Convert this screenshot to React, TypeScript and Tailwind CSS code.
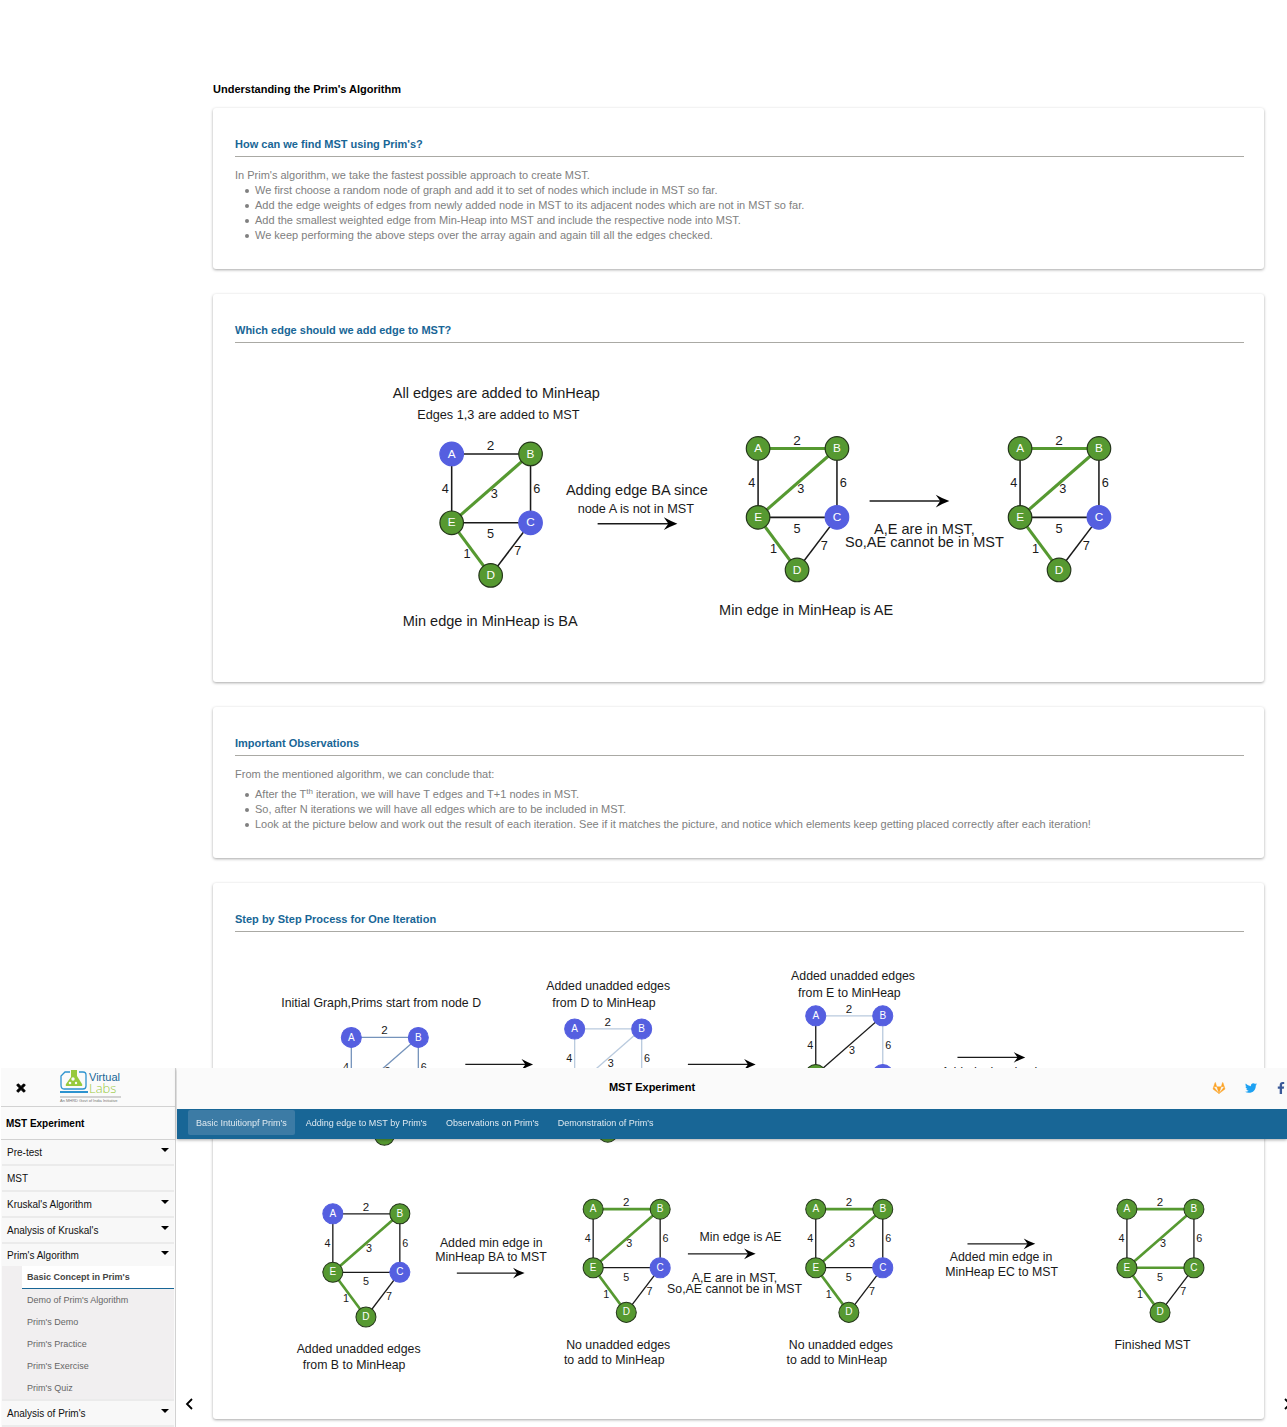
import type { ReactNode } from "react";
import { FaFacebookF, FaGitlab, FaTimes, FaTwitter } from "react-icons/fa";

const GREEN = "#569931";
const BLUE = "#555fe0";
const BLACK = "#1a1a1a";
const STEEL = "#7593bb";
const PALE = "#b9cade";

type NodeId = "A" | "B" | "C" | "D" | "E";
type EdgeId = "AB" | "AE" | "BE" | "BC" | "EC" | "ED" | "CD";

const NODES: Record<NodeId, [number, number]> = {
  A: [0, 0],
  B: [87, 0],
  C: [87, 76],
  D: [44, 134],
  E: [0, 76],
};

const WEIGHTS: { text: string; x: number; y: number; size: number }[] = [
  { text: "2", x: 43, y: -4, size: 15 },
  { text: "4", x: -7, y: 43, size: 14 },
  { text: "3", x: 47, y: 49, size: 14 },
  { text: "6", x: 94, y: 43, size: 14 },
  { text: "5", x: 43, y: 93, size: 14 },
  { text: "1", x: 17, y: 115, size: 14 },
  { text: "7", x: 73, y: 112, size: 14 },
];

const EDGES: EdgeId[] = ["AB", "AE", "BC", "EC", "CD", "BE", "ED"];

type GraphProps = {
  x: number;
  y: number;
  visited: string;
  tree?: EdgeId[];
  base?: string;
  heap?: EdgeId[];
  bottom?: number;
};

function Graph({ x, y, visited, tree = [], base = BLACK, heap = [], bottom = 134 }: GraphProps) {
  const place = (id: NodeId): [number, number] => (id === "D" ? [43, bottom] : NODES[id]);
  return (
    <g transform={`translate(${x} ${y})`}>
      {EDGES.map((id) => {
        const [x1, y1] = place(id[0] as NodeId);
        const [x2, y2] = place(id[1] as NodeId);
        const inTree = tree.includes(id);
        const color = inTree ? GREEN : heap.includes(id) ? BLACK : base;
        return <line key={id} x1={x1} y1={y1} x2={x2} y2={y2} stroke={color} strokeWidth={inTree ? 3.4 : 1.7} />;
      })}
      {(Object.keys(NODES) as NodeId[]).map((id) => {
        const [cx, cy] = place(id);
        const on = visited.includes(id);
        return (
          <g key={id}>
            <circle cx={cx} cy={cy} r={13} fill={on ? GREEN : BLUE} stroke={on ? "#24361a" : BLUE} strokeWidth={1.3} />
            <text x={cx} y={cy + 4} fontSize={13} fill="#fff" textAnchor="middle">
              {id}
            </text>
          </g>
        );
      })}
      {WEIGHTS.map((w) => (
        <text key={w.text} x={w.x} y={w.y} fontSize={w.size} fill={BLACK} textAnchor="middle">
          {w.text}
        </text>
      ))}
    </g>
  );
}

function Arrow({ x, y }: { x: number; y: number }) {
  return (
    <g transform={`translate(${x} ${y})`}>
      <line x1={0} y1={0} x2={82} y2={0} stroke={BLACK} strokeWidth={1.6} />
      <path d="M88 0 Q80 -3 73 -7 L78 0 L73 7 Q80 3 88 0 Z" fill="#000" />
    </g>
  );
}

function Note({ x, y, size = 16, children }: { x: number; y: number; size?: number; children: string }) {
  return (
    <text x={x} y={y} fontSize={size} fill={BLACK}>
      {children}
    </text>
  );
}

function EdgeFigure() {
  return (
    <svg viewBox="0 0 1113 335" className="mt-[13px] block w-full" role="img" aria-label="Choosing the next edge for the MST">
      <Note x={174} y={46}>All edges are added to MinHeap</Note>
      <Note x={201} y={70} size={14}>Edges 1,3 are added to MST</Note>
      <Graph x={239} y={108} visited="BED" tree={["BE", "ED"]} />
      <Note x={185} y={298}>Min edge in MinHeap is BA</Note>
      <Note x={365} y={153}>Adding edge BA since</Note>
      <Note x={378} y={173} size={14}>node A is not in MST</Note>
      <Arrow x={400} y={185} />
      <Graph x={577} y={102} visited="ABED" tree={["AB", "BE", "ED"]} />
      <Note x={534} y={286}>Min edge in MinHeap is AE</Note>
      <Arrow x={700} y={160} />
      <Note x={705} y={196}>A,E are in MST,</Note>
      <Note x={673} y={211}>So,AE cannot be in MST</Note>
      <Graph x={866} y={102} visited="ABED" tree={["AB", "BE", "ED"]} />
    </svg>
  );
}

function IterationFigure() {
  return (
    <svg viewBox="0 0 1310 587" className="mt-[13px] block w-full" role="img" aria-label="Iterations of Prim's algorithm">
      <Note x={60} y={80}>Initial Graph,Prims start from node D</Note>
      <Graph x={151} y={120} visited="D" base={STEEL} bottom={127} />
      <Arrow x={299} y={155} />
      <Note x={404} y={59}>Added unadded edges</Note>
      <Note x={412} y={80}>from D to MinHeap</Note>
      <Graph x={441} y={109} visited="D" base={PALE} heap={["ED", "CD"]} />
      <Arrow x={588} y={155} />
      <Note x={722} y={46}>Added unadded edges</Note>
      <Note x={731} y={68}>from E to MinHeap</Note>
      <Graph x={754} y={92} visited="ED" base={PALE} tree={["ED"]} heap={["AE", "BE", "EC", "CD"]} />
      <Arrow x={938} y={146} />
      <Note x={917} y={170}>Added min edge in</Note>

      <Graph x={127} y={349} visited="BED" tree={["BE", "ED"]} />
      <Note x={80} y={530}>Added unadded edges</Note>
      <Note x={88} y={550}>from B to MinHeap</Note>
      <Note x={266} y={392}>Added min edge in</Note>
      <Note x={260} y={410}>MinHeap BA to MST</Note>
      <Arrow x={288} y={426} />
      <Graph x={465} y={343} visited="ABED" tree={["AB", "BE", "ED"]} />
      <Note x={430} y={524}>No unadded edges</Note>
      <Note x={427} y={544}>to add to MinHeap</Note>
      <Note x={603} y={384}>Min edge is AE</Note>
      <Arrow x={588} y={401} />
      <Note x={593} y={437}>A,E are in MST,</Note>
      <Note x={561} y={452}>So,AE cannot be in MST</Note>
      <Graph x={754} y={343} visited="ABED" tree={["AB", "BE", "ED"]} />
      <Note x={719} y={524}>No unadded edges</Note>
      <Note x={716} y={544}>to add to MinHeap</Note>
      <Arrow x={951} y={388} />
      <Note x={928} y={410}>Added min edge in</Note>
      <Note x={922} y={430}>MinHeap EC to MST</Note>
      <Graph x={1158} y={343} visited="ABCED" tree={["AB", "BE", "EC", "ED"]} />
      <Note x={1142} y={524}>Finished MST</Note>
    </svg>
  );
}

function Card({ title, children, text = false }: { title: string; children: ReactNode; text?: boolean }) {
  return (
    <section
      className={`rounded-[3px] bg-white pt-7 pr-5 pl-[22px] shadow-[0_1px_3px_rgba(0,0,0,0.35)] ${text ? "pb-[26px]" : "pb-[22px]"}`}
    >
      <h2 className="border-b border-[#aaa9a4] pb-1 text-[11px] leading-4 font-bold text-[#186696]">{title}</h2>
      {children}
    </section>
  );
}

function Bullet({ children }: { children: ReactNode }) {
  return (
    <li className="flex gap-[6px] pl-[10px]">
      <span className="mt-[6px] size-1 shrink-0 rounded-full bg-[#808080]" />
      <p>{children}</p>
    </li>
  );
}

const STEPS = [
  "We first choose a random node of graph and add it to set of nodes which include in MST so far.",
  "Add the edge weights of edges from newly added node in MST to its adjacent nodes which are not in MST so far.",
  "Add the smallest weighted edge from Min-Heap into MST and include the respective node into MST.",
  "We keep performing the above steps over the array again and again till all the edges checked.",
];

const TABS = ["Basic Intuitionpf Prim's", "Adding edge to MST by Prim's", "Observations on Prim's", "Demonstration of Prim's"];

const LESSONS = ["Basic Concept in Prim's", "Demo of Prim's Algorithm", "Prim's Demo", "Prim's Practice", "Prim's Exercise", "Prim's Quiz"];

function Caret() {
  return (
    <svg viewBox="0 0 8 4" className="mb-1 h-1 w-2" aria-hidden="true">
      <path d="M0 0H8L4 4Z" fill="#000" />
    </svg>
  );
}

function Section({ label, caret = true }: { label: string; caret?: boolean }) {
  return (
    <button className="flex h-[26px] w-full items-center justify-between border-b-2 border-[#ebebeb] bg-[#f8f8f8] px-[5px] text-left text-[10px] text-[#111]">
      {label}
      {caret && <Caret />}
    </button>
  );
}

function Logo() {
  return (
    <svg viewBox="0 0 64 36" className="h-9 w-16" role="img" aria-label="Virtual Labs">
      <path d="M11 4H6L2 8V17Q2 21 5 21H24Q27 21 27 18V7Q27 4 24 4H20" fill="none" stroke="#2d93cf" strokeWidth="1.3" />
      <path d="M1 23H29V25H1Z" fill="#2d93cf" />
      <path d="M12 2H18V8L23 16Q24 18 22 18H8Q6 18 7 16L12 9Z" fill="#97c93d" />
      <circle cx="14" cy="11" r="1.7" fill="#fafafa" />
      <circle cx="11" cy="15" r="1.3" fill="#fafafa" />
      <circle cx="17" cy="15" r="1.2" fill="#fafafa" />
      <text x="30" y="13" fontSize="11" fill="#186696" fontFamily="Liberation Sans">Virtual</text>
      <text x="30" y="25" fontSize="13" fill="#97c93d" fontFamily="Open Sans" fontWeight="300">Labs</text>
      <path d="M1 29H62" stroke="#a9a9a9" strokeWidth="1" />
      <text x="1" y="34" fontSize="4" fill="#777">An MHRD Govt of India Initiative</text>
    </svg>
  );
}

function Sidebar() {
  return (
    <aside className="ml-px flex w-[175px] shrink-0 flex-col border-r border-[#d2d2d2] bg-[#fafafa]">
      <div className="flex h-[39px] shrink-0 items-start border-b border-[#d2d2d2]">
        <button aria-label="Close menu" className="mt-[14px] ml-[14px] text-xs text-black">
          <FaTimes className="stroke-black [stroke-width:40]" />
        </button>
        <a href="#home" className="ml-[32px]">
          <Logo />
        </a>
      </div>
      <h2 className="flex h-[33px] shrink-0 items-center border-b border-[#d2d2d2] pl-[5px] text-[10px] font-bold text-black">
        MST Experiment
      </h2>
      <nav className="px-px">
        <Section label="Pre-test" />
        <Section label="MST" caret={false} />
        <Section label="Kruskal's Algorithm" />
        <Section label="Analysis of Kruskal's" />
        <button className="flex h-[22px] w-full items-center justify-between bg-[#f8f8f8] px-[5px] text-left text-[10px] text-[#111]">
          Prim's Algorithm
          <Caret />
        </button>
        <ul className="border-b-2 border-[#ebebeb] bg-[#f1eff0] pl-5">
          {LESSONS.map((lesson, i) => (
            <li key={lesson}>
              <a
                href="#lesson"
                className={
                  i === 0
                    ? "flex h-[23px] items-center border-b border-[#186696] bg-white pt-px pl-[5px] text-[9px] font-bold text-[#444]"
                    : "flex h-[22px] items-center pt-px pl-[5px] text-[9px] text-[#666]"
                }
              >
                {lesson}
              </a>
            </li>
          ))}
        </ul>
        <Section label="Analysis of Prim's" />
      </nav>
    </aside>
  );
}

function Header() {
  return (
    <header className="ml-px shadow-[0_1px_3px_rgba(0,0,0,0.35)]">
      <div className="flex h-[41px] items-center bg-[#fafafa] pb-[2px]">
        <h1 className="flex-1 text-center text-[11px] font-bold text-black">MST Experiment</h1>
        <div className="flex w-[160px] shrink-0 items-center gap-[19px] pl-[85px] text-xs">
          <a href="#gitlab" aria-label="GitLab" className="shrink-0 text-[#fca326]">
            <FaGitlab className="h-3 w-[14px] stroke-[#fca326] [stroke-width:16]" />
          </a>
          <a href="#twitter" aria-label="Twitter" className="shrink-0 text-[#1da1f2]">
            <FaTwitter />
          </a>
          <a href="#facebook" aria-label="Facebook" className="-ml-px shrink-0 text-[#3b5998]">
            <FaFacebookF />
          </a>
        </div>
      </div>
      <nav className="flex h-[30px] items-start gap-[3px] bg-[#186696] pt-px pl-[11px]">
        {TABS.map((tab, i) => (
          <a
            key={tab}
            href="#tab"
            className={`flex h-[25px] items-center rounded-[2px] px-2 pt-[2px] text-[9px] text-[#dfe9f0] ${i === 0 ? "bg-[#3c7ba5]" : ""}`}
          >
            {tab}
          </a>
        ))}
      </nav>
    </header>
  );
}

function Chevron({ flip = false }: { flip?: boolean }) {
  return (
    <svg viewBox="0 0 8 12" className="h-3 w-2" aria-hidden="true">
      <path d={flip ? "M1 1L6 6L1 11" : "M7 1L2 6L7 11"} fill="none" stroke="#000" strokeWidth="1.8" />
    </svg>
  );
}

export default function App() {
  return (
    <div className="relative min-h-screen overflow-hidden bg-white font-['Liberation_Sans',Arial,sans-serif]">
      <main className="flex flex-col pt-[81px] pr-[23px] pb-2 pl-[213px]">
        <h1 className="mb-[11px] text-[11px] leading-4 font-bold text-black">Understanding the Prim's Algorithm</h1>
        <div className="flex flex-col gap-[25px]">
          <Card title="How can we find MST using Prim's?" text>
            <div className="mt-[11px] text-[11px] leading-[15px] text-[#808080]">
              <p>In Prim's algorithm, we take the fastest possible approach to create MST.</p>
              <ul>
                {STEPS.map((step) => (
                  <Bullet key={step}>{step}</Bullet>
                ))}
              </ul>
            </div>
          </Card>
          <Card title="Which edge should we add edge to MST?">
            <EdgeFigure />
          </Card>
          <Card title="Important Observations" text>
            <div className="mt-[11px] text-[11px] leading-[15px] text-[#808080]">
              <p>From the mentioned algorithm, we can conclude that:</p>
              <ul className="pt-[5px]">
                <Bullet>
                  After the T<sup className="text-[8px]">th</sup> iteration, we will have T edges and T+1 nodes in MST.
                </Bullet>
                <Bullet>So, after N iterations we will have all edges which are to be included in MST.</Bullet>
                <Bullet>
                  Look at the picture below and work out the result of each iteration. See if it matches the picture, and notice
                  which elements keep getting placed correctly after each iteration!
                </Bullet>
              </ul>
            </div>
          </Card>
          <Card title="Step by Step Process for One Iteration">
            <IterationFigure />
          </Card>
        </div>
      </main>

      <div className="pointer-events-none fixed inset-x-0 bottom-0 flex h-[359px] overflow-hidden [&_a]:pointer-events-auto [&_button]:pointer-events-auto">
        <Sidebar />
        <div className="flex min-w-0 flex-1 flex-col justify-between">
          <Header />
          <div className="flex justify-between pb-[17px] pl-[9px]">
            <button aria-label="Previous page">
              <Chevron />
            </button>
            <button aria-label="Next page" className="-mr-[5px]">
              <Chevron flip />
            </button>
          </div>
        </div>
      </div>
    </div>
  );
}
